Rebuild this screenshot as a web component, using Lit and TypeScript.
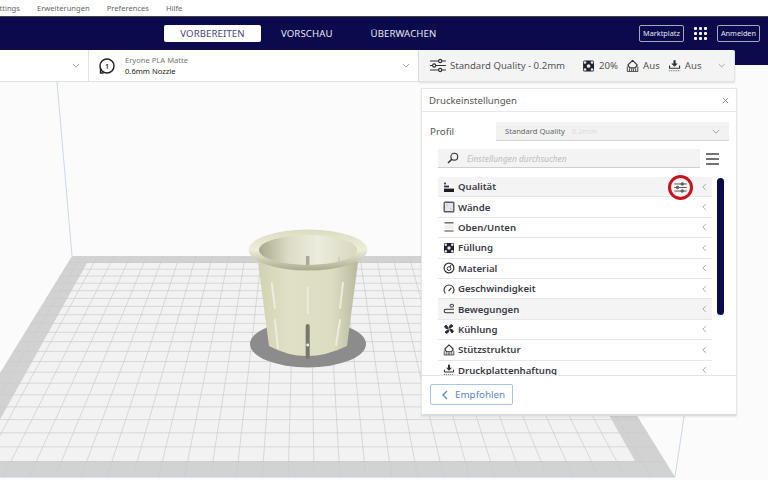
import { LitElement, html, svg, css } from 'lit';
import { customElement } from 'lit/decorators.js';

const chevronDown = html`<svg class="chev" viewBox="0 0 10 6" width="8" height="5"><path d="M1 1l4 4 4-4" fill="none" stroke="#8a8a8a" stroke-width="1"/></svg>`;
const chevronLeft = svg`<path d="M4.5 1L1 4.5 4.5 8" fill="none" stroke="#9a9a9a" stroke-width="1"/>`;

const sliders = (w: number, h: number, c: string, sw = 1.2, knob = 'none') => html`<svg viewBox="0 0 16 14" width=${w} height=${h}>
  <g fill=${knob} stroke=${c} stroke-width=${sw}>
    <path d="M0 2.5h8.5M12 2.5h4M0 7h2.5M6 7h10M0 11.5h8.5M12 11.5h4"/>
    <circle cx="10.2" cy="2.5" r="1.6"/><circle cx="4.2" cy="7" r="1.6"/><circle cx="10.2" cy="11.5" r="1.6"/>
  </g></svg>`;

// small setting icons, 12x12 box
const rowIcons: Record<string, unknown> = {
  layers: svg`<rect x="1" y="7.6" width="10" height="3.4" fill="#1c1c24"/><rect x="1" y="4.6" width="5" height="1.8" fill="#333"/><rect x="1" y="1.6" width="2" height="1.8" fill="#444"/>`,
  walls: svg`<rect x="1.2" y="1.2" width="9.6" height="9.6" rx=".8" fill="#e6e6ea" stroke="#555a6a" stroke-width="1.4"/><path d="M3 3l2 2M9 9L7 7" stroke="#aaa" stroke-width=".6"/>`,
  top: svg`<rect x="1.5" y="1" width="9" height="1.6" fill="#777"/><rect x="1.5" y="3.6" width="9" height="4.4" fill="#eee"/><rect x="1.5" y="9" width="9" height="2" fill="#a0a0a0"/>`,
  infill: svg`<rect x="1" y="1" width="10" height="10" rx="1.4" fill="#20222e"/><circle cx="6" cy="6" r="1.7" fill="#e8e8e8"/><circle cx="2.8" cy="2.8" r="1.2" fill="#e8e8e8"/><circle cx="9.2" cy="2.8" r="1.2" fill="#e8e8e8"/><circle cx="2.8" cy="9.2" r="1.2" fill="#e8e8e8"/><circle cx="9.2" cy="9.2" r="1.2" fill="#e8e8e8"/>`,
  material: svg`<circle cx="6" cy="6" r="4.9" fill="none" stroke="#333" stroke-width="1.2"/><circle cx="6" cy="6.6" r="1.9" fill="none" stroke="#333" stroke-width="1"/><path d="M7 5l1-2.4" stroke="#333"/>`,
  speed: svg`<path d="M2.4 10.4A5 5 0 1 1 9.6 10.4" fill="none" stroke="#333" stroke-width="1.1"/><path d="M5.6 8l2.8-3" stroke="#333" stroke-width="1.1"/>`,
  travel: svg`<path d="M11 6.2H3a1.8 1.8 0 0 0 0 3.6h8" fill="none" stroke="#333" stroke-width="1.1"/><rect x="7.2" y="1.4" width="3.2" height="2.6" rx=".6" fill="none" stroke="#333"/>`,
  cooling: svg`<path d="M6 6L3 2 1.6 3.6 2.6 5.2zM6 6l4-3-1.6-1.4L6.8 2.6zM6 6l3 4 1.4-1.6-1-1.6zM6 6l-4 3 1.6 1.4 1.6-1z" fill="#2a2a34" stroke="#2a2a34" stroke-width="1" stroke-linejoin="round"/><circle cx="6" cy="6" r=".8" fill="#fff"/>`,
  support: svg`<path d="M3.4 7.8L1.8 5 6 .9 10.2 5 8.6 7.8z" fill="none" stroke="#333" stroke-width="1.1" stroke-linejoin="round"/><path d="M1.2 6.4V11M3.2 8.4V11M5.2 8.4V11M6.8 8.4V11M8.8 8.4V11M10.8 6.4V11" stroke="#444" stroke-width=".9"/><path d="M1 11h10" stroke="#444" stroke-width=".8"/>`,
  adhesion: svg`<path d="M5 .8h2v3h2L6 6.8 3 3.8h2z" fill="#333"/><path d="M1.4 5.6V8h9.2V5.6" fill="none" stroke="#333" stroke-width="1"/><path d="M.8 10.4h10.4" stroke="#777" stroke-width="1" stroke-dasharray="1.2 .8"/>`,
};

const rows: [string, string][] = [
  ['layers', 'Qualität'],
  ['walls', 'Wände'],
  ['top', 'Oben/Unten'],
  ['infill', 'Füllung'],
  ['material', 'Material'],
  ['speed', 'Geschwindigkeit'],
  ['travel', 'Bewegungen'],
  ['cooling', 'Kühlung'],
  ['support', 'Stützstruktur'],
  ['adhesion', 'Druckplattenhaftung'],
];

const icon = (name: string, size = 12) =>
  html`<svg viewBox="0 0 12 12" width=${size} height=${size}>${rowIcons[name]}</svg>`;

/** Build plate drawn in perspective: lines meet towards the back edge. */
function plate() {
  const cx = 305;
  const yBack = 256;
  const yFront = 477;
  const scale = 1.58;
  const lines = [];
  for (let i = -14; i <= 14; i++) {
    const xb = cx + (i + 0.35) * 16.4;
    const xf = cx + (i + 0.35) * 16.4 * scale;
    lines.push(svg`<line x1=${xb} y1=${yBack} x2=${xf} y2=${yFront}/>`);
  }
  const count = 22;
  for (let i = 1; i < count; i++) {
    // even steps in depth, so rows grow wider towards the viewer
    const d = i / count;
    const w = 1 / (1 / scale + (1 - 1 / scale) * d);
    const y = yFront - ((scale - w) / (scale - 1)) * (yFront - yBack);
    lines.push(svg`<line x1=${0} y1=${y} x2=${700} y2=${y}/>`);
  }
  return lines;
}

const slots: [number, number, number, number][] = [
  [271.7, 283, 275, 308],
  [307.7, 288, 307.7, 313],
  [343, 283, 340, 308],
  [275, 320, 278, 348],
  [340, 320, 336, 345],
];

@customElement('app-root')
export class AppRoot extends LitElement {
  static styles = css`
    :host {
      display: block;
      width: 768px;
      height: 480px;
      position: relative;
      overflow: hidden;
      background: #fbfbfc;
      font-family: 'Noto Sans', sans-serif;
      color: #333;
    }
    .scene {
      position: absolute;
      inset: 0;
    }
    .menu {
      position: relative;
      height: 16px;
      background: #fff;
      border-bottom: 1px solid #444;
      display: flex;
      align-items: center;
      font-size: 7.6px;
      color: #666;
      margin-left: -9px;
      gap: 17px;
    }
    .nav {
      position: relative;
      height: 48px;
      background: #0a0a4d;
      display: flex;
      align-items: flex-start;
      padding: 8px 8px 0 164px;
      box-sizing: border-box;
      color: #e8e8f0;
    }
    .tab {
      font-size: 9.6px;
      height: 17px;
      line-height: 17px;
      text-align: center;
      letter-spacing: 0.1px;
    }
    .tab.active {
      width: 97px;
      background: #fff;
      border-radius: 2px;
      color: #45457c;
    }
    .tab.preview {
      margin-left: 20px;
    }
    .tab.monitor {
      margin-left: 38px;
    }
    .nav-right {
      margin-left: auto;
      display: flex;
      align-items: center;
      gap: 10px;
    }
    .outline {
      height: 17px;
      line-height: 15px;
      box-sizing: border-box;
      border: 1px solid #a8a8b8;
      border-radius: 2px;
      font-size: 7.3px;
      padding: 0 3px;
      color: #e8e8f0;
    }
    .apps {
      display: grid;
      grid-template-columns: repeat(3, 3px);
      gap: 2px;
    }
    .apps i {
      width: 3px;
      height: 3px;
      background: #fff;
      border-radius: 1px;
    }
    .toolbar {
      position: relative;
      margin-top: -15px;
      height: 32px;
      display: flex;
      width: 735px;
    }
    .seg {
      background: #fff;
      display: flex;
      align-items: center;
      box-sizing: border-box;
      border-bottom: 1px solid #e2e2e2;
      border-right: 1px solid #e2e2e2;
      flex: none;
    }
    .seg.first {
      width: 89px;
      justify-content: flex-end;
      padding-right: 8px;
    }
    .seg.extruder {
      width: 330px;
      padding: 0 8px 0 9px;
    }
    .extruder-text {
      margin-left: 9px;
      font-size: 7.6px;
      line-height: 11px;
      flex: 1;
      color: #222;
    }
    .extruder-text div:first-child {
      color: #777;
    }
    .seg.quality {
      flex: 1;
      min-width: 0;
      background: #f4f4f5;
      padding: 0 9px 0 11px;
      border-radius: 0 2px 2px 0;
      box-shadow: 0 1px 2px rgba(0, 0, 0, 0.12);
      font-size: 9.6px;
      color: #555;
    }
    .q-name {
      margin-left: 4px;
      width: 132px;
      flex: none;
      white-space: nowrap;
    }
    .q-val {
      margin: 0 8px 0 4px;
      white-space: nowrap;
    }
    .quality .chev {
      margin-left: 8px;
    }
    .panel {
      position: absolute;
      left: 421px;
      top: 88px;
      width: 316px;
      height: 328px;
      background: #fff;
      box-sizing: border-box;
      border: 1px solid #e6e6e6;
      border-bottom: 2px solid #dcdcdc;
      box-shadow: 0 1px 2px rgba(0, 0, 0, 0.08);
      display: flex;
      flex-direction: column;
    }
    .panel-head {
      height: 22px;
      display: flex;
      align-items: center;
      justify-content: space-between;
      padding: 0 7px;
      font-size: 9.6px;
      color: #555;
      border-bottom: 1px solid #e8e8e8;
      flex: none;
    }
    .profile {
      display: flex;
      align-items: center;
      padding: 10px 7px 0 8px;
      font-size: 9.8px;
      color: #555;
      flex: none;
    }
    .profile-label {
      width: 66px;
    }
    .select {
      flex: 1;
      height: 18px;
      background: #f2f2f2;
      border-bottom: 1px solid #d4d4d4;
      display: flex;
      align-items: center;
      padding: 0 9px;
      font-size: 7.6px;
      color: #666;
    }
    .select span {
      margin-left: 7px;
      color: #dcdcdc;
    }
    .select .chev {
      margin-left: auto;
    }
    .search-row {
      display: flex;
      align-items: center;
      padding: 8px 17px 0 16px;
      flex: none;
    }
    .search {
      flex: 1;
      height: 18px;
      background: #f3f3f3;
      border-bottom: 1px solid #cfcfcf;
      display: flex;
      align-items: center;
      padding-left: 9px;
      font-size: 8.4px;
      font-style: italic;
      color: #bdbdbd;
      gap: 8px;
    }
    .burger {
      margin-left: 6px;
      display: block;
    }
    .settings {
      flex: 1;
      min-height: 0;
      display: flex;
      padding: 9px 12px 0 16px;
      overflow: hidden;
      border-bottom: 1px solid #e4e4e4;
    }
    .list {
      width: 274px;
      flex: none;
    }
    .row {
      height: 19.4px;
      border-bottom: 1px solid #e8e8e8;
      display: flex;
      align-items: center;
      padding: 0 5px;
      font-size: 9.6px;
      font-weight: 600;
      color: #3a3a48;
      position: relative;
    }
    .row.hot {
      background: #f4f4f4;
    }
    .row .name {
      margin-left: 3px;
      flex: 1;
    }
    .mark {
      position: absolute;
      left: 230px;
      top: -2px;
      width: 25px;
      height: 25px;
      box-sizing: border-box;
      border: 3px solid #c8121c;
      border-radius: 50%;
      display: flex;
      align-items: center;
      justify-content: center;
    }
    .scrollbar {
      margin: 1px 0 0 5px;
      width: 7px;
      height: 137px;
      border-radius: 4px;
      background: #0a0a4d;
      flex: none;
    }
    .foot {
      flex: none;
      height: 38px;
      padding: 8px;
      box-sizing: border-box;
    }
    .back {
      width: 83px;
      height: 21px;
      box-sizing: border-box;
      border: 1px solid #a9c3e6;
      border-radius: 2px;
      display: flex;
      align-items: center;
      padding-left: 11px;
      gap: 7px;
      font-size: 9.8px;
      color: #5a86c4;
    }
  `;

  render() {
    return html`
      <svg class="scene" viewBox="0 0 768 480" width="768" height="480">
        <defs>
          <clipPath id="plate"><path d="M72 256H538L675 477H-64Z"/></clipPath>
          <linearGradient id="body" x1="0" x2="1" y1="0" y2="0">
            <stop offset="0" stop-color="#d2d2b2"/>
            <stop offset=".3" stop-color="#e0e0c6"/>
            <stop offset=".75" stop-color="#dcdcc0"/>
            <stop offset="1" stop-color="#b8b89c"/>
          </linearGradient>
          <linearGradient id="inner" x1="0" x2="1" y1="0" y2="0">
            <stop offset="0" stop-color="#a8a88c"/>
            <stop offset=".3" stop-color="#dcdcc4"/>
            <stop offset=".6" stop-color="#ecece0"/>
            <stop offset="1" stop-color="#d8d8bc"/>
          </linearGradient>
          <linearGradient id="rim" x1="0" x2="0" y1="0" y2="1">
            <stop offset="0" stop-color="#dcdcc2"/>
            <stop offset=".5" stop-color="#eeeeda"/>
            <stop offset="1" stop-color="#a9a98c"/>
          </linearGradient>
          <filter id="soft"><feGaussianBlur stdDeviation=".7"/></filter>
        </defs>
        <path d="M57 82L72 256M675 477L684 417L700 300" fill="none" stroke="#cfd6ea" stroke-width="1"/>
        <path d="M72 256H538L675 477H-64Z" fill="#d2d2d2"/>
        <path d="M87 263H523L635 461H-23Z" fill="#f2f2f2"/>
        <g clip-path="url(#plate)" stroke="#cbcbcb" stroke-width=".7">${plate()}</g>
        <path d="M-64 477H675" stroke="#c4cde4" stroke-width="1"/>
        <g filter="url(#soft)">
          <ellipse cx="308" cy="344" rx="58" ry="23.5" fill="#8c8c8c"/>
          <path d="M258 262L269 346Q306 366 347 346L358 262Z" fill="url(#body)"/>
          <ellipse cx="308" cy="250" rx="59.5" ry="20.5" fill="url(#rim)"/>
          <ellipse cx="308" cy="250" rx="49" ry="15" fill="url(#inner)"/>
          <g stroke="#ecece0" stroke-width="2" stroke-linecap="round">
            ${slots.map(([x1, y1, x2, y2]) => svg`<line x1=${x1} y1=${y1} x2=${x2} y2=${y2}/>`)}
          </g>
          <path d="M307.7 256V265" stroke="#a8a8a0" stroke-width="3.5"/>
          <path d="M277 257V263M339 257V263" stroke="#c8c8b4" stroke-width="1.4"/>
          <path d="M307.7 326V357" stroke="#77776c" stroke-width="4" stroke-linecap="round"/>
          <circle cx="307.7" cy="345" r="1.4" fill="#f4f4ea"/>
        </g>
      </svg>

      <div class="menu">
        <span>Settings</span><span>Erweiterungen</span><span>Preferences</span><span>Hilfe</span>
      </div>
      <div class="nav">
        <div class="tab active">VORBEREITEN</div>
        <div class="tab preview">VORSCHAU</div>
        <div class="tab monitor">ÜBERWACHEN</div>
        <div class="nav-right">
          <div class="outline">Marktplatz</div>
          <div class="apps">${Array.from({ length: 9 }, () => html`<i></i>`)}</div>
          <div class="outline">Anmelden</div>
        </div>
      </div>
      <div class="toolbar">
        <div class="seg first">${chevronDown}</div>
        <div class="seg extruder">
          <svg viewBox="0 0 18 18" width="18" height="18">
            <circle cx="9" cy="9" r="7" fill="#fff" stroke="#222" stroke-width="1.5"/>
            <path d="M2.5 11v5h3" fill="none" stroke="#222" stroke-width="1.4"/>
            <text x="9" y="11.6" font-size="7" text-anchor="middle" font-weight="600" fill="#222">1</text>
          </svg>
          <div class="extruder-text"><div>Eryone PLA Matte</div><div>0.6mm Nozzle</div></div>
          ${chevronDown}
        </div>
        <div class="seg quality">
          ${sliders(17, 15, '#333')}
          <span class="q-name">Standard Quality - 0.2mm</span>
          ${icon('infill', 14)}
          <span class="q-val">20%</span>
          ${icon('support', 14)}
          <span class="q-val">Aus</span>
          ${icon('adhesion', 14)}
          <span class="q-val">Aus</span>
          ${chevronDown}
        </div>
      </div>

      <section class="panel">
        <div class="panel-head">
          <span>Druckeinstellungen</span>
          <svg viewBox="0 0 8 8" width="7" height="7"><path d="M1 1l6 6M7 1L1 7" stroke="#888" stroke-width="1"/></svg>
        </div>
        <div class="profile">
          <div class="profile-label">Profil</div>
          <div class="select">Standard Quality <span>0.2mm</span>${chevronDown}</div>
        </div>
        <div class="search-row">
          <div class="search">
            <svg viewBox="0 0 12 12" width="12" height="12"><circle cx="7.3" cy="4.7" r="3.4" fill="none" stroke="#333" stroke-width="1.1"/><path d="M4.8 7.2L1 11" stroke="#333" stroke-width="1.5"/></svg>
            Einstellungen durchsuchen
          </div>
          <svg class="burger" viewBox="0 0 13 12" width="13" height="12"><path d="M0 1h13M0 6h13M0 11h13" stroke="#444" stroke-width="1.3"/></svg>
        </div>
        <div class="settings">
          <div class="list">
            ${rows.map(
              ([ic, name], i) => html`<div class="row ${i === 0 || i === 6 ? 'hot' : ''}">
                ${icon(ic)}
                <span class="name">${name}</span>
                ${i === 0 ? html`<div class="mark">${sliders(13, 11, '#555', 1.2, '#666')}</div>` : ''}
                <svg viewBox="0 0 6 9" width="5" height="8">${chevronLeft}</svg>
              </div>`,
            )}
          </div>
          <div class="scrollbar"></div>
        </div>
        <div class="foot">
          <div class="back">
            <svg viewBox="0 0 6 10" width="6" height="10"><path d="M5 1L1 5l4 4" fill="none" stroke="#5a86c4" stroke-width="1.3"/></svg>
            Empfohlen
          </div>
        </div>
      </section>
    `;
  }
}
